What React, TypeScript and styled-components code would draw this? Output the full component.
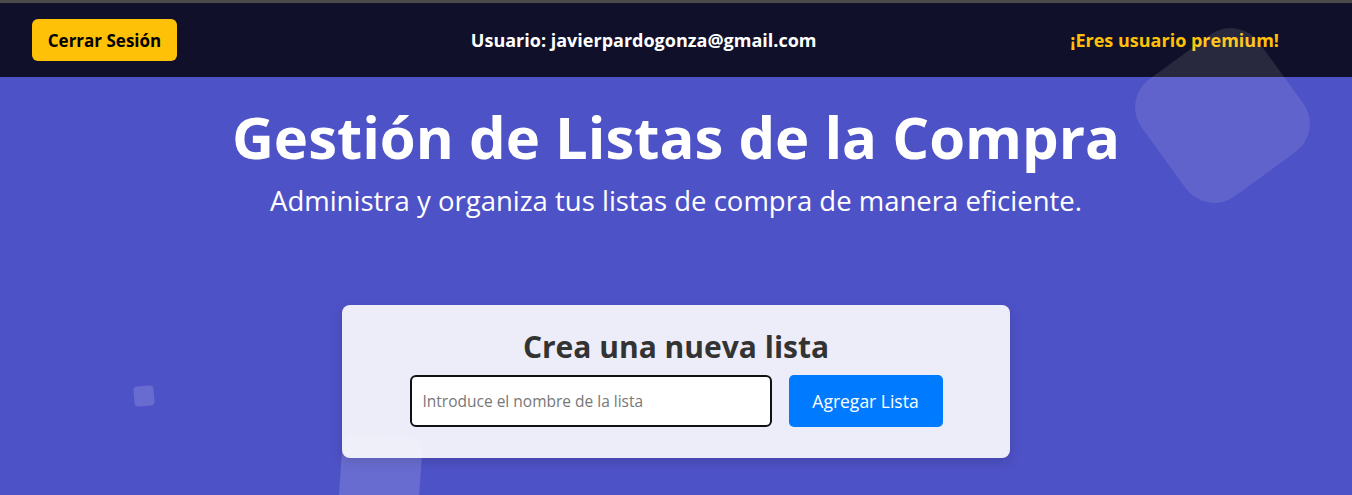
import React from "react";
import styled, { createGlobalStyle } from "styled-components";

const Global = createGlobalStyle`
  html, body { margin: 0; padding: 0; }
  body {
    background: #4e52c7;
    font-family: "Open Sans", "Noto Sans", sans-serif;
    overflow: hidden;
  }
  #root { min-height: 100vh; }
`;

const Page = styled.div`
  position: relative;
  min-height: 495px;
  height: 495px;
  overflow: hidden;
  background: #4e52c7;
  display: flex;
  flex-direction: column;
`;

const Header = styled.header`
  height: 74px;
  border-top: 3px solid #4a4a4a;
  background: #10102a;
  display: flex;
  align-items: center;
  justify-content: space-between;
  padding: 0 73px 0 32px;
`;

const LogoutButton = styled.button`
  background: #ffc107;
  color: #000;
  border: none;
  border-radius: 6px;
  width: 145px;
  height: 42px;
  font-family: inherit;
  font-weight: 700;
  font-size: 17px;
  cursor: pointer;
`;

const UserText = styled.span<{ $color?: string; $shift?: number }>`
  color: ${(p) => p.$color ?? "#fff"};
  font-weight: 700;
  font-size: 18px;
  margin-left: ${(p) => p.$shift ?? 0}px;
`;

const Hero = styled.section`
  display: flex;
  flex-direction: column;
  align-items: center;
  color: #fff;
`;

const Title = styled.h1`
  margin: 25px 0 0;
  font-size: 58px;
  line-height: 70px;
  font-weight: 700;
`;

const Subtitle = styled.p`
  margin: 11px 0 0;
  font-size: 27.5px;
  line-height: 36px;
  font-weight: 400;
`;

const Card = styled.div`
  align-self: center;
  margin-top: 86px;
  width: 668px;
  box-sizing: border-box;
  padding: 23px 0 31px;
  background: #ededf9;
  border-radius: 8px;
  box-shadow: 0 4px 12px rgba(0, 0, 0, 0.15);
  display: flex;
  flex-direction: column;
  align-items: center;
  position: relative;
  z-index: 1;
`;

const CardTitle = styled.h2`
  margin: 0 0 9px;
  font-size: 30px;
  line-height: 38px;
  font-weight: 700;
  color: #333;
`;

const Row = styled.div`
  display: flex;
  gap: 17px;
`;

const Input = styled.input`
  box-sizing: border-box;
  width: 362px;
  height: 52px;
  border: 2px solid #111;
  border-radius: 6px;
  background: #fff;
  padding: 0 11px;
  font-family: inherit;
  font-size: 15.5px;
  outline: none;
  &::placeholder { color: #777; }
`;

const AddButton = styled.button`
  width: 154px;
  height: 52px;
  border: none;
  border-radius: 5px;
  background: #007bff;
  color: #fff;
  font-family: inherit;
  font-size: 17.5px;
  cursor: pointer;
`;

const Shape = styled.div<{ $size: number; $radius: number; $rot: number; $alpha: number }>`
  position: absolute;
  width: ${(p) => p.$size}px;
  height: ${(p) => p.$size}px;
  border-radius: ${(p) => p.$radius}px;
  transform: rotate(${(p) => p.$rot}deg);
  background: rgba(255, 255, 255, ${(p) => p.$alpha});
  pointer-events: none;
  z-index: 2;
`;

const BigShape = styled(Shape)`
  left: 1150px;
  top: 43px;
`;

const SmallShape = styled(Shape)`
  left: 134px;
  top: 386px;
`;

const BottomShape = styled(Shape)`
  left: 339px;
  top: 436px;
  height: 120px;
`;

export default function App() {
  return (
    <>
      <Global />
      <Page>
        <Header>
          <LogoutButton>Cerrar Sesión</LogoutButton>
          <UserText $shift={40}>Usuario: javierpardogonza@gmail.com</UserText>
          <UserText $color="#ffc107">¡Eres usuario premium!</UserText>
        </Header>
        <Hero>
          <Title>Gestión de Listas de la Compra</Title>
          <Subtitle>Administra y organiza tus listas de compra de manera eficiente.</Subtitle>
        </Hero>
        <Card>
          <CardTitle>Crea una nueva lista</CardTitle>
          <Row>
            <Input autoFocus placeholder="Introduce el nombre de la lista" />
            <AddButton>Agregar Lista</AddButton>
          </Row>
        </Card>
        <BigShape $size={145} $radius={35} $rot={54} $alpha={0.1} />
        <SmallShape $size={20} $radius={4} $rot={-5} $alpha={0.15} />
        <BottomShape $size={80} $radius={12} $rot={4} $alpha={0.15} />
      </Page>
    </>
  );
}
